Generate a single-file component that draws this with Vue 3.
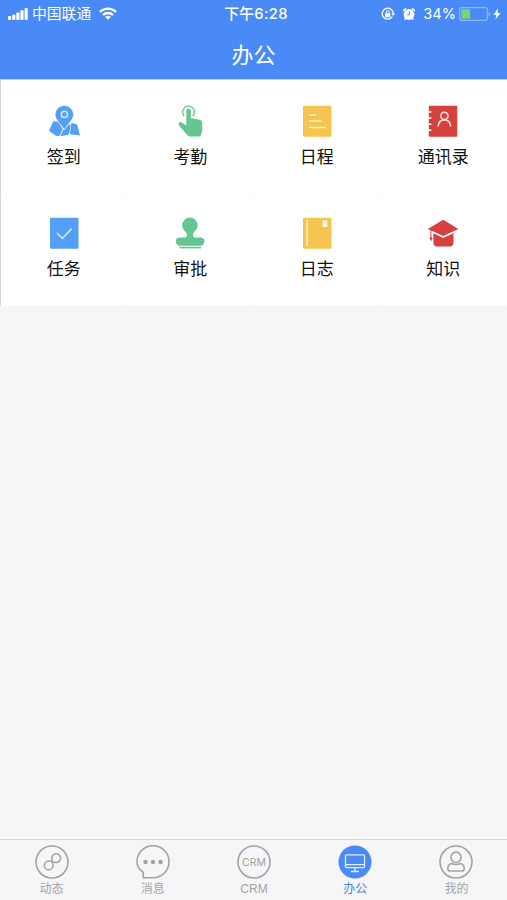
<script setup>
import { ref } from 'vue';

const activeTab = ref('office');

// 办公应用
const apps = [
  { key: 'sign', name: '签到', color: '#54a0f8' },
  { key: 'attend', name: '考勤', color: '#66c692' },
  { key: 'schedule', name: '日程', color: '#f5c550' },
  { key: 'contacts', name: '通讯录', color: '#d5413f' },
  { key: 'task', name: '任务', color: '#54a0f8' },
  { key: 'approve', name: '审批', color: '#66c692' },
  { key: 'journal', name: '日志', color: '#f5c550' },
  { key: 'knowledge', name: '知识', color: '#d5413f' }
];

// 底部导航
const tabs = [
  { key: 'feed', name: '动态' },
  { key: 'message', name: '消息' },
  { key: 'crm', name: 'CRM' },
  { key: 'office', name: '办公' },
  { key: 'mine', name: '我的' }
];
</script>

<template>
  <div class="page">
    <header class="header">
      <div class="status-bar">
        <div class="status-left">
          <svg class="signal" width="20" height="12" viewBox="0 0 20 12" fill="#fff">
            <rect x="0" y="8" width="3.2" height="4" rx="1" />
            <rect x="4.2" y="6.5" width="3.2" height="5.5" rx="1" />
            <rect x="8.3" y="4.5" width="3.2" height="7.5" rx="1" />
            <rect x="12.4" y="2.3" width="3.2" height="9.7" rx="1" />
            <rect x="16.6" y="0" width="3.2" height="12" rx="1" />
          </svg>
          <span class="carrier">中国联通</span>
          <svg class="wifi" width="18" height="13" viewBox="0 0 18 13" fill="none" stroke="#fff" stroke-width="2.3">
            <path d="M1 4.8a11.5 11.5 0 0 1 16 0" />
            <path d="M4 8a7.2 7.2 0 0 1 10 0" />
            <path d="M9 12.8L6.2 10a4 4 0 0 1 5.6 0z" fill="#fff" stroke="none" />
          </svg>
        </div>
        <div class="status-time">下午6:28</div>
        <div class="status-right">
          <svg width="14" height="14" viewBox="0 0 14 14" fill="none" stroke="#fff">
            <path d="M11.4 9.6A5.5 5.5 0 1 1 12.2 6" stroke-width="1.3" />
            <path d="M10.2 6.2H14l-1.9 2.9z" fill="#fff" stroke="none" />
            <rect x="4.1" y="6.2" width="5.2" height="4" rx=".5" fill="#fff" stroke="none" />
            <path d="M5.2 6.5V5a1.5 1.5 0 0 1 3 0v1.5" stroke-width="1" />
          </svg>
          <svg class="alarm" width="14" height="14" viewBox="0 0 14 14">
            <circle cx="7" cy="7.5" r="5.4" fill="#fff" />
            <path d="M1.7 3.4L3.6 1.8M12.3 3.4L10.4 1.8M3.6 11.4L3 12.2M10.4 11.4l.6.8" stroke="#fff" stroke-width="1.6" stroke-linecap="round" />
            <path d="M7.4 4.5v3.4H5.2" fill="none" stroke="#4a8af6" stroke-width="1" />
          </svg>
          <span class="percent">34%</span>
          <svg class="battery" width="32" height="14" viewBox="0 0 32 14">
            <rect x=".6" y=".6" width="27.8" height="12.8" rx="2.5" fill="none" stroke="#8fb8fa" stroke-width="1.1" />
            <rect x="2.3" y="2.3" width="8.7" height="9.4" rx="1" fill="#76d672" />
            <path d="M29.7 4.8v4.6q1.6-.7 1.6-2.3t-1.6-2.3z" fill="#8fb8fa" />
          </svg>
          <svg width="8" height="12" viewBox="0 0 8 12">
            <path d="M5 .3L.4 6.9h2.9L2.4 11.7 7.5 4.9H4.5z" fill="#fff" />
          </svg>
        </div>
      </div>
      <h1 class="title">办公</h1>
    </header>

    <main class="content">
      <div class="grid">
        <div v-for="app in apps" :key="app.key" class="cell">
          <svg class="app-icon" width="32" height="32" viewBox="0 0 32 32" :fill="app.color">
            <g v-if="app.key === 'sign'">
              <path d="M5.2 16.3L10 16.5 14.9 24 11.2 31.3 8 30.7 1 25.9z" />
              <path d="M12.2 31.3l3-6.2 5.6-5.6 2 .3-2 10z" />
              <path d="M23.4 17.8l5.8 1.8L32 30.5l-10.1-1.2z" />
              <path d="M16.3.3a9.3 9.3 0 0 1 9.3 9.2c0 5.5-5.3 9-9.3 15.3C12.3 18.5 7 15 7 9.5A9.3 9.3 0 0 1 16.3.3z" stroke="#fff" stroke-width=".8" />
              <circle cx="16.4" cy="9.4" r="3.1" fill="none" stroke="#d8eafe" stroke-width="1.5" />
            </g>
            <g v-else-if="app.key === 'attend'">
              <path d="M10.4 11.2a5.9 5.9 0 1 1 8.4 0" fill="none" :stroke="app.color" stroke-width="1.3" />
              <path d="M12.3 5.8a2.3 2.3 0 0 1 4.6 0v7.3l8.6 1.6q2.8.7 2.8 3.5v6.3q0 3-2 6.9H15.5q-2-.6-3.4-2.7L5 20.5q-1.3-2 .2-3.2 1.3-.8 2.8.3l4.3 3z" />
            </g>
            <g v-else-if="app.key === 'schedule'">
              <rect x="2" y=".8" width="28.5" height="30.9" rx="1" />
              <path d="M8 10h7.3M8 16h12.7M8 22.4h16.6" stroke="#fff2d0" stroke-width="1.5" />
            </g>
            <g v-else-if="app.key === 'contacts'">
              <rect x="1.8" y=".8" width="28.5" height="30.9" rx="1" />
              <path d="M1 7h3.4M1 13h3.4M1 19.3h3.4M1 25.3h3.4" stroke="#fff" stroke-width="1.4" />
              <circle cx="17.4" cy="10.9" r="3.6" fill="none" stroke="#ffe1dc" stroke-width="1.6" />
              <path d="M11.2 21.5q.3-6.3 6.2-6.7 5.9.4 6.3 6.7" fill="none" stroke="#ffe1dc" stroke-width="1.6" />
            </g>
            <g v-else-if="app.key === 'task'">
              <rect x="2" y=".8" width="28.5" height="30.9" rx="1" />
              <path d="M9 16l5.4 5.4 9.2-9.6" fill="none" stroke="#e2f0ff" stroke-width="1.4" />
            </g>
            <g v-else-if="app.key === 'approve'">
              <path d="M15.9.6a7.7 7.7 0 0 1 7.7 7.8c0 4.2-3.6 5.6-4.5 8.5-.5 1.8.1 3.3 1.6 3.5h5.6a4.1 4.1 0 0 1 0 8.3H5.9a4.1 4.1 0 0 1 0-8.3h5.3c1.5-.2 2.1-1.7 1.6-3.5-.9-2.9-4.6-4.3-4.6-8.5A7.7 7.7 0 0 1 15.9.6z" />
              <rect x="5.2" y="29.8" width="22" height="1.6" />
            </g>
            <g v-else-if="app.key === 'journal'">
              <rect x="2" y=".8" width="28.5" height="30.9" rx="1" />
              <path d="M6.1 3.3v25.8" stroke="#fff6df" stroke-width="1.5" />
              <rect x="21.6" y="3.5" width="4.6" height="6.5" fill="#fffaf0" />
            </g>
            <g v-else>
              <path d="M16.2 2.7l15.2 9.2-15.2 7.2L.8 11.9z" />
              <path d="M6.4 16.3l9.8 4.7 10.3-4.7v9.5q0 3.6-3.5 3.6H10q-3.6 0-3.6-3.6z" />
              <path d="M3.9 12.5v7.2" :stroke="app.color" stroke-width="1" />
              <path d="M4 19.2l1.5 2-1.3 3-1.6-3z" />
            </g>
          </svg>
          <span class="app-name">{{ app.name }}</span>
        </div>
      </div>
    </main>

    <nav class="tab-bar">
      <div
        v-for="tab in tabs"
        :key="tab.key"
        class="tab"
        :class="{ active: activeTab === tab.key }"
        @click="activeTab = tab.key"
      >
        <svg class="tab-icon" width="34" height="34" viewBox="0 0 34 34" fill="none" stroke="currentColor" stroke-width="1.6">
          <path v-if="tab.key === 'message'" d="M7.3 32.7V27.2C3 24.5 1 21 1 17A16 16 0 1 1 17 32.7z" />
          <circle v-else-if="tab.key === 'office'" cx="17" cy="17" r="16.5" fill="#4a8af6" stroke="none" />
          <circle v-else cx="17" cy="17" r="16" />

          <path v-if="tab.key === 'feed'" d="M16.8 13.2A4.4 4.4 0 1 1 21.2 17.5C18.6 17.5 16.4 16 13.7 16A4.4 4.4 0 1 0 18.1 20.4C18.1 18.3 16.8 16.5 16.8 13.2z" />
          <g v-if="tab.key === 'message'" fill="currentColor" stroke="none">
            <circle cx="9.5" cy="17" r="2.2" />
            <circle cx="17" cy="17" r="2.2" />
            <circle cx="24.6" cy="17" r="2.2" />
          </g>
          <text v-if="tab.key === 'crm'" class="crm-text" x="17" y="20.8" text-anchor="middle">CRM</text>
          <g v-if="tab.key === 'office'" stroke="#e4efff" stroke-width="1.3">
            <rect x="7.5" y="9.8" width="19" height="12.8" rx="1" />
            <path d="M8 19.7h18M17 22.6v3.6M13 26.5h8" />
          </g>
          <g v-if="tab.key === 'mine'">
            <ellipse cx="17" cy="12.3" rx="5" ry="5.2" />
            <path d="M12.7 18.5q-3.9 1-3.9 5.2 0 2.3 2.5 2.3h11.4q2.5 0 2.5-2.3 0-4.2-3.9-5.2-4.3 2-8.6 0z" />
          </g>
        </svg>
        <span class="tab-name">{{ tab.name }}</span>
      </div>
    </nav>
  </div>
</template>

<style>
body {
  margin: 0;
}
</style>

<style scoped>
.page {
  display: flex;
  flex-direction: column;
  height: 100vh;
  background: #f6f6f7;
  font-family: "Liberation Sans", "Noto Sans CJK SC", sans-serif;
  overflow: hidden;
}
.header {
  height: 80px;
  flex-shrink: 0;
  background: #4a8af6;
  border-bottom: 1px solid #b9d2fb;
  box-sizing: border-box;
  color: #fff;
}
.status-bar {
  display: grid;
  grid-template-columns: 1fr auto 1fr;
  align-items: center;
  height: 27px;
  padding: 0 6px 0 8px;
  font-family: Inter, "Noto Sans CJK SC", sans-serif;
  font-size: 15px;
  line-height: 27px;
}
.status-left,
.status-right {
  display: flex;
  align-items: center;
}
.carrier {
  margin: 0 8px 0 4px;
  padding-top: 2px;
  font-size: 14.8px;
  line-height: 25px;
}
.status-time {
  padding: 1px 0 0 3px;
  font-weight: 500;
  font-size: 14.8px;
  line-height: 26px;
  letter-spacing: 0.3px;
}
.status-right {
  justify-content: flex-end;
}
.alarm {
  margin-left: 7px;
}
.percent {
  margin: 0 3px 0 7px;
  padding-top: 2px;
  font-size: 14.6px;
  line-height: 25px;
}
.battery {
  margin-right: 2px;
}
.title {
  margin: 0;
  height: 52px;
  line-height: 57px;
  text-align: center;
  font-size: 22px;
  font-weight: 400;
}
.content {
  flex: 1;
}
.grid {
  display: grid;
  grid-template-columns: repeat(4, 1fr);
  grid-template-rows: 113px 113px;
  height: 226px;
  box-sizing: border-box;
  background: #fff;
  border-left: 1px solid #d8d8da;
}
.cell {
  display: flex;
  flex-direction: column;
  align-items: center;
  padding-top: 25px;
  box-sizing: border-box;
  border-right: 1px solid #fcfcfc;
  border-bottom: 1px solid #fcfcfc;
}
.cell:nth-child(n + 5) {
  padding-top: 24px;
}
.app-icon {
  display: block;
  flex-shrink: 0;
}
.app-name {
  margin-top: 8px;
  font-size: 17px;
  line-height: 26px;
  color: #111;
}
.tab-bar {
  display: flex;
  height: 61px;
  flex-shrink: 0;
  box-sizing: border-box;
  padding-left: 1px;
  background: #f6f6f8;
  border-top: 1px solid #d6d6d8;
}
.tab {
  flex: 1;
  display: flex;
  flex-direction: column;
  align-items: center;
  padding-top: 5px;
  color: #a2a2a4;
  cursor: pointer;
}
.tab.active {
  color: #4288dc;
}
.tab-icon {
  display: block;
  flex-shrink: 0;
}
.crm-text {
  font-family: Inter, sans-serif;
  font-size: 10.5px;
  fill: currentColor;
  stroke: none;
}
.tab-name {
  margin-top: 1px;
  font-size: 12px;
  line-height: 18px;
}
</style>
